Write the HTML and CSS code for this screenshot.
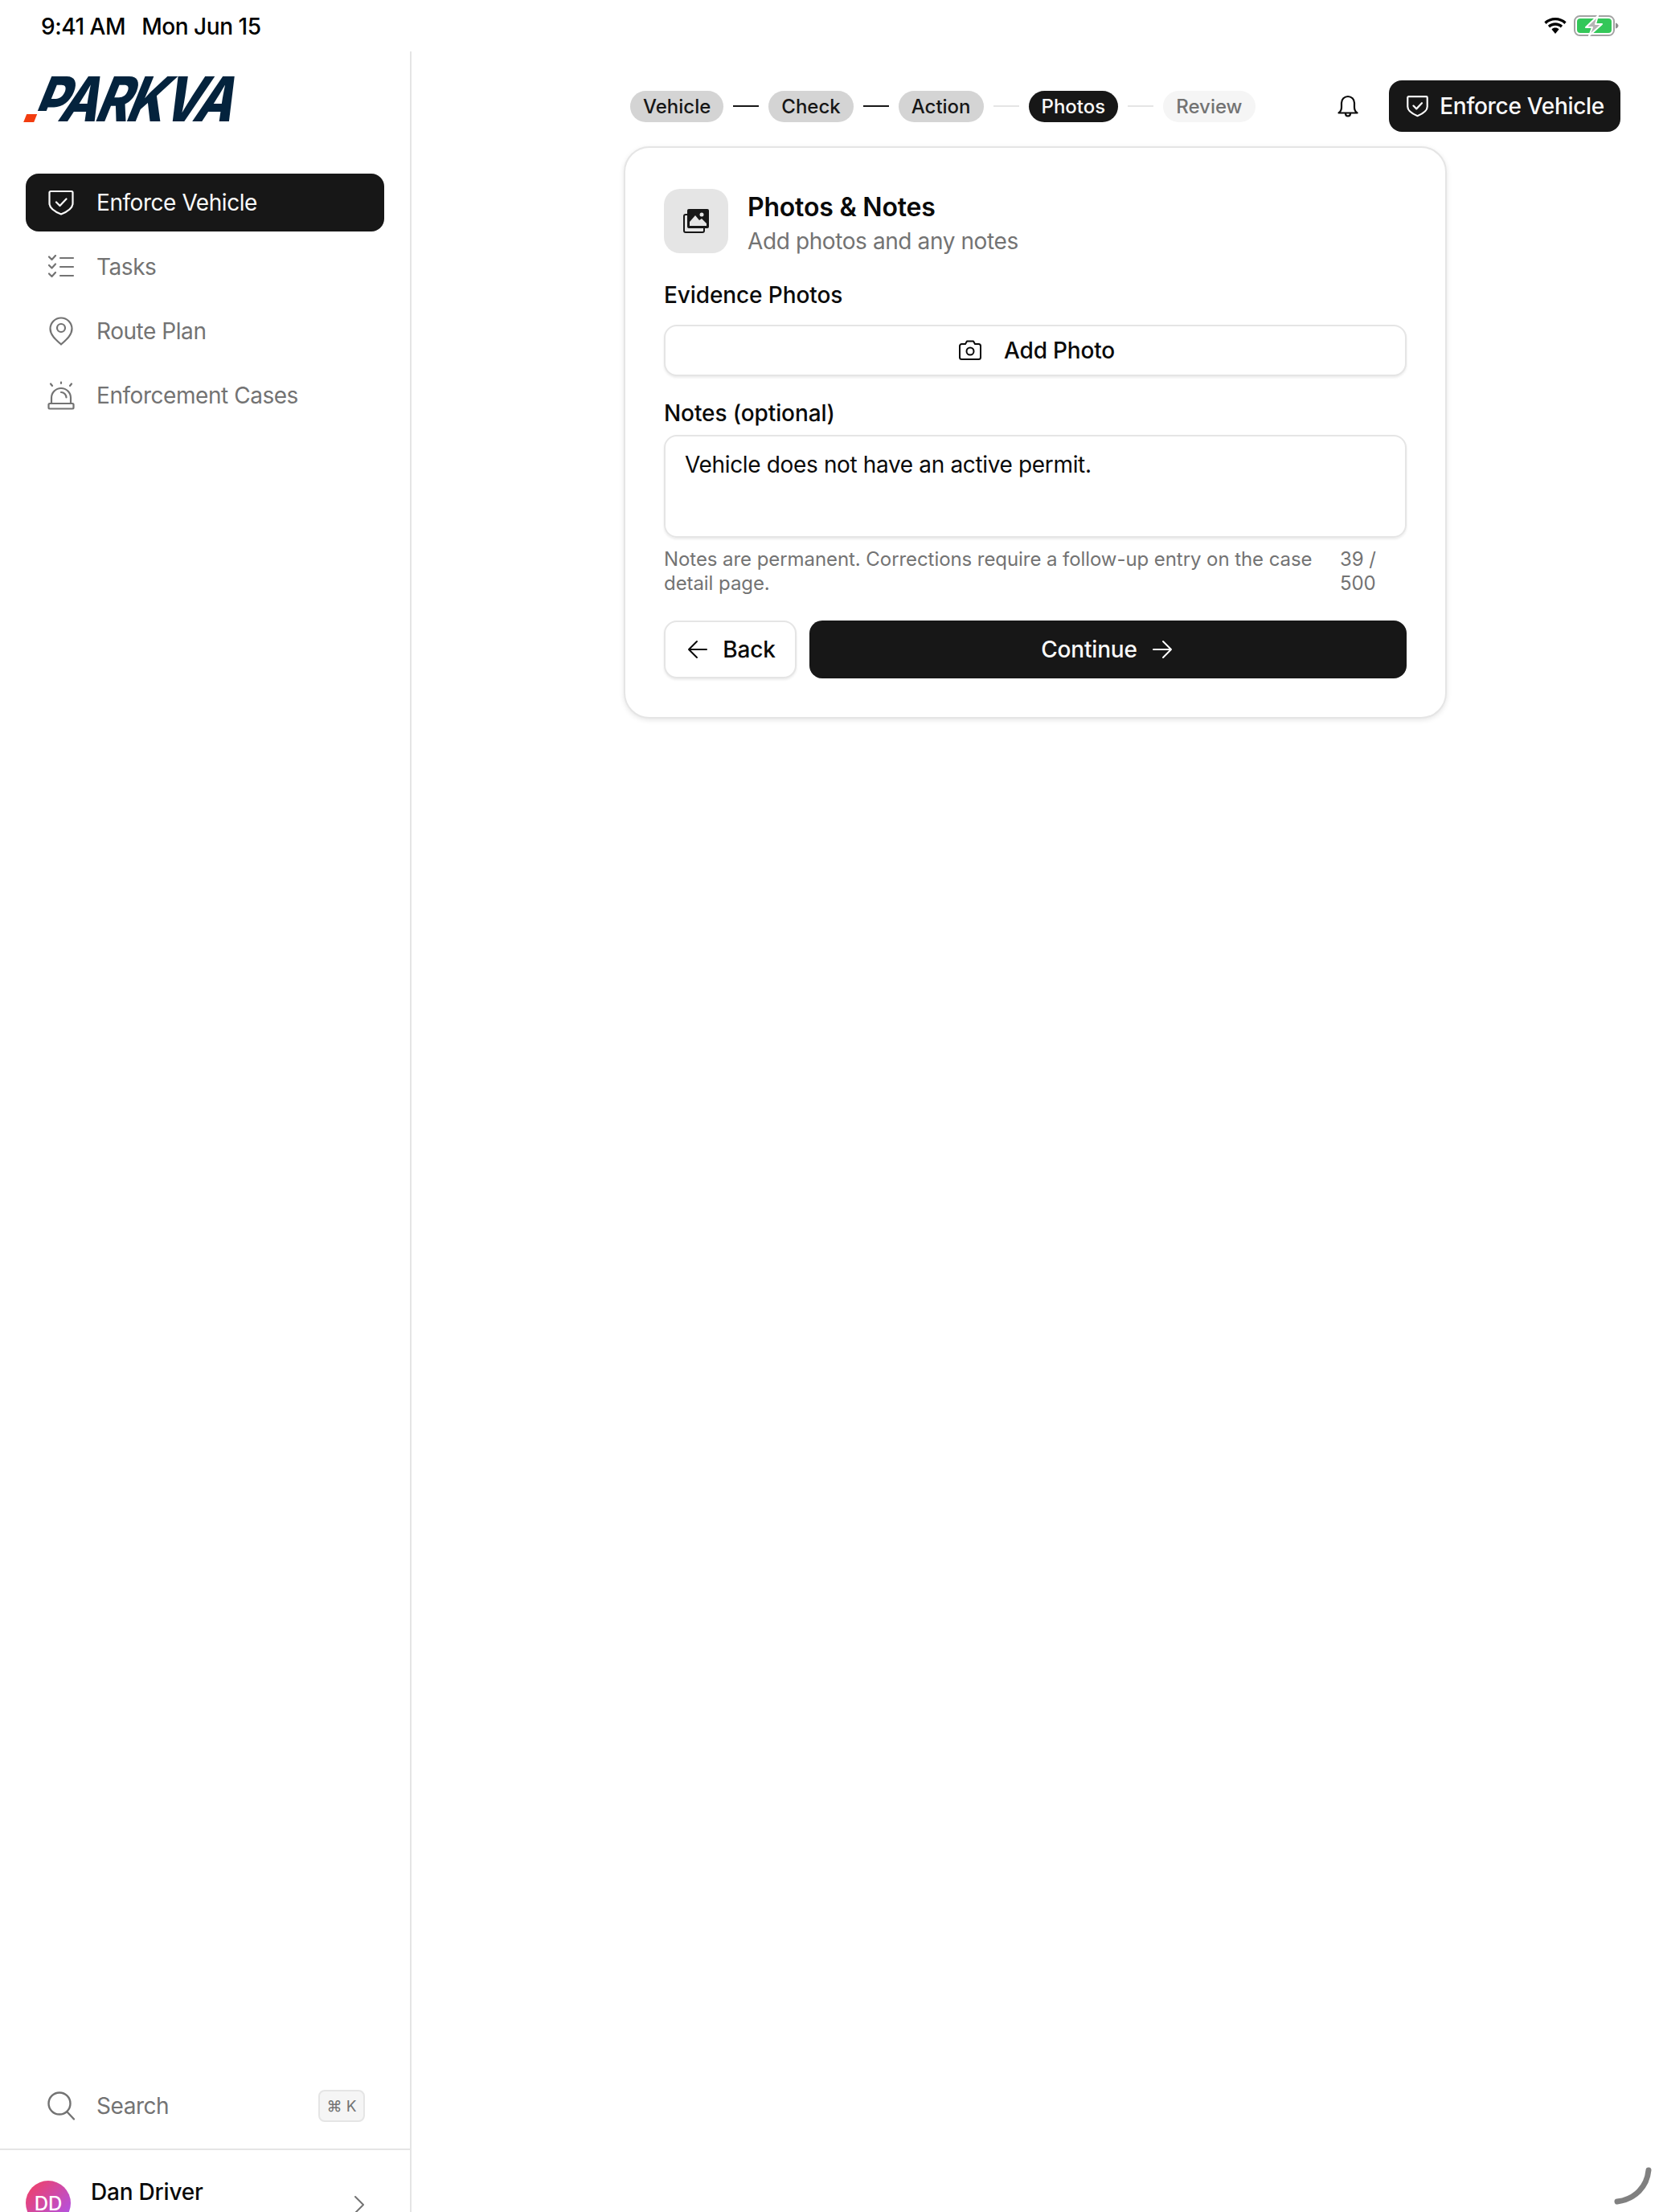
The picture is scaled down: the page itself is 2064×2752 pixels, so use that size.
FILE: index.html
```html
<!DOCTYPE html>
<html lang="en">
<head>
    <meta charset="UTF-8">
    <title>Parkva - Photos &amp; Notes</title>
    <link rel="stylesheet" href="styles.css">
</head>
<body>

    <!-- Status bar -->
    <div class="status-bar">
        <div class="status-time"><span>9:41 AM</span><span>Mon Jun 15</span></div>
        <div class="status-icons">
            <svg class="wifi" width="30" height="21" viewBox="0 0 28 20"><path d="M14 3.2c4.2 0 8 1.6 10.8 4.3l2.2-2.4C23.600 1.900 19 0 14 0S4.400 1.900 1 5.100l2.200 2.400C6 4.800 9.800 3.200 14 3.200z" fill="#000"/><path d="M14 9.300c2.500 0 4.800 1 6.500 2.500l2.200-2.400C20.400 7.300 17.300 6 14 6S7.600 7.300 5.300 9.400l2.200 2.400C9.200 10.300 11.500 9.300 14 9.300z" fill="#000"/><path d="M14 12c-1.700 0-3.200.6-4.300 1.700L14 19l4.300-5.300C17.200 12.600 15.700 12 14 12z" fill="#000"/></svg>
            <svg class="battery" width="56" height="26" viewBox="0 0 56 26">
                <rect x="1" y="1" width="49" height="24" rx="6.500" fill="none" stroke="#a3a3a3" stroke-width="2"/>
                <rect x="4" y="4" width="43" height="18" rx="4" fill="#34c759"/>
                <path d="M52 9.500c2 .5 3.500 2 3.500 3.500s-1.500 3-3.500 3.500z" fill="#8e8e8e"/>
                <path d="M30 0.500L15 15h8l-4 10.500L35 11h-8z" fill="#b5b5b5" stroke="#fff" stroke-width="2" stroke-linejoin="round"/>
            </svg>
        </div>
    </div>

    <div class="app">
        <aside class="sidebar">
            <div class="logo"><span class="logo-text">PARKVA</span><span class="logo-mark"></span></div>

            <nav class="nav">
                <a class="nav-item active">
                    <svg width="32" height="32" viewBox="0 0 32 32" fill="none" stroke="currentColor" stroke-width="2.200" stroke-linecap="round" stroke-linejoin="round"><path d="M3 2h26c.8 0 1.500.7 1.500 1.500V17c0 6.500-7 10.500-14.500 13.500C8.500 27.500 1.500 23.500 1.500 17V3.500C1.500 2.700 2.200 2 3 2z"/><path d="M10 15.500l4.500 4.500L22.500 11.500"/></svg>
                    Enforce Vehicle
                </a>
                <a class="nav-item">
                    <svg width="32" height="30" viewBox="0 0 32 30" fill="none" stroke="currentColor" stroke-width="2.200" stroke-linecap="round" stroke-linejoin="round"><path d="M1 2.500l3.500 3.500L9 1"/><path d="M1 13l3.500 3.500L9 11.500"/><path d="M1 23.500L4.500 27 9 22"/><path d="M15 4h16M15 15h16M15 26h16"/></svg>
                    Tasks
                </a>
                <a class="nav-item">
                    <svg width="32" height="36" viewBox="0 0 32 36" fill="none" stroke="currentColor" stroke-width="2.200" stroke-linecap="round" stroke-linejoin="round"><path d="M16 34.500C10 29 2.500 23 2.500 15a13.500 13.500 0 0 1 27 0c0 8-7.500 14-13.500 19.500z"/><circle cx="16" cy="14" r="5"/></svg>
                    Route Plan
                </a>
                <a class="nav-item">
                    <svg width="34" height="36" viewBox="0 0 34 36" fill="none" stroke="currentColor" stroke-width="2.200" stroke-linecap="round" stroke-linejoin="round"><path d="M5 28V21a12 12 0 0 1 24 0v7"/><path d="M17 14a6.500 6.500 0 0 1 6.500 6.500"/><rect x="1.500" y="28" width="31" height="6.500" rx="1.500"/><path d="M17 1.500v1.500M4 3.500l2 2.500M30 3.500l-2 2.500"/></svg>
                    Enforcement Cases
                </a>
            </nav>

            <div class="search-row">
                <svg width="34" height="36" viewBox="0 0 34 36" fill="none" stroke="#737373" stroke-width="2.400" stroke-linecap="round"><circle cx="15" cy="15" r="13.500"/><path d="M25 26l8 8.500"/></svg>
                <span class="search-label">Search</span>
                <span class="kbd">⌘ K</span>
            </div>

            <div class="user-row">
                <div class="avatar">DD</div>
                <div class="user-name">Dan Driver</div>
                <svg class="chevron" width="14" height="24" viewBox="0 0 14 24" fill="none" stroke="#737373" stroke-width="2" stroke-linecap="round" stroke-linejoin="round"><path d="M2 2l10 10L2 22"/></svg>
            </div>
        </aside>

        <main class="main">
            <header class="topbar">
                <div class="steps">
                    <span class="step done">Vehicle</span>
                    <span class="step-line done"></span>
                    <span class="step done">Check</span>
                    <span class="step-line done"></span>
                    <span class="step done">Action</span>
                    <span class="step-line"></span>
                    <span class="step current">Photos</span>
                    <span class="step-line"></span>
                    <span class="step">Review</span>
                </div>
                <svg class="bell" width="26" height="28" viewBox="0 0 26 28" fill="none" stroke="#0a0a0a" stroke-width="2.200" stroke-linecap="round" stroke-linejoin="round"><path d="M1.500 22.500c2-1.500 3.500-3 3.500-7V10a8 8 0 0 1 16 0v5.500c0 4 1.500 5.500 3.500 7z"/><path d="M10 23c0 2 1.300 3.500 3 3.500s3-1.500 3-3.500"/></svg>
                <button class="btn-enforce">
                    <svg width="27" height="28" viewBox="0 0 32 32" fill="none" stroke="currentColor" stroke-width="2.600" stroke-linecap="round" stroke-linejoin="round"><path d="M3 2h26c.8 0 1.500.7 1.500 1.500V17c0 6.500-7 10.500-14.500 13.500C8.500 27.500 1.500 23.500 1.500 17V3.500C1.500 2.700 2.200 2 3 2z"/><path d="M10 15.500l4.500 4.500L22.500 11.500"/></svg>
                    Enforce Vehicle
                </button>
            </header>

            <section class="card">
                <div class="card-head">
                    <div class="card-icon">
                        <svg width="32" height="30" viewBox="0 0 32 30"><rect x="1" y="7" width="25" height="22" rx="2" fill="none" stroke="#171717" stroke-width="2"/><rect x="5" y="0" width="27" height="24" rx="2" fill="#171717"/><path d="M8 21v-5l7-8 5 6 3-2 6 6v3z" fill="#e5e5e5"/><circle cx="23" cy="7" r="2.500" fill="#e5e5e5"/></svg>
                    </div>
                    <div class="card-title">
                        <h2>Photos &amp; Notes</h2>
                        <p>Add photos and any notes</p>
                    </div>
                </div>

                <label class="field-label">Evidence Photos</label>
                <button class="btn-outline add-photo">
                    <svg width="28" height="26" viewBox="0 0 28 26" fill="none" stroke="#0a0a0a" stroke-width="2" stroke-linecap="round" stroke-linejoin="round"><path d="M3.500 5h4.500l2-3.500h8l2 3.500h4.500a2.500 2.500 0 0 1 2.500 2.500v14a2.500 2.500 0 0 1-2.500 2.500h-21A2.500 2.500 0 0 1 1 21.500v-14A2.500 2.500 0 0 1 3.500 5z"/><circle cx="14" cy="14" r="4.500"/></svg>
                    Add Photo
                </button>

                <label class="field-label notes-label">Notes (optional)</label>
                <div class="notes-box">Vehicle does not have an active permit.</div>
                <div class="helper">
                    <span class="helper-text">Notes are permanent. Corrections require a follow-up entry on the case detail page.</span>
                    <span class="helper-count">39 / 500</span>
                </div>

                <div class="actions">
                    <button class="btn-outline btn-back">
                        <svg width="26" height="24" viewBox="0 0 26 24" fill="none" stroke="#0a0a0a" stroke-width="2" stroke-linecap="round" stroke-linejoin="round"><path d="M12 2L2 12l10 10M2 12h22"/></svg>
                        Back
                    </button>
                    <button class="btn-continue">
                        Continue
                        <svg width="26" height="24" viewBox="0 0 26 24" fill="none" stroke="#fff" stroke-width="2" stroke-linecap="round" stroke-linejoin="round"><path d="M14 2l10 10-10 10M24 12H2"/></svg>
                    </button>
                </div>
            </section>
        </main>
    </div>

    <!-- Home corner mark -->
    <svg class="corner-mark" width="52" height="52" viewBox="0 0 52 52" fill="none" stroke="#808080" stroke-width="7" stroke-linecap="round"><path d="M44 4C42 24 28 40 5 43"/></svg>

</body>
</html>
```
FILE: styles.css
```css
* {
    box-sizing: border-box;
}
html, body {
    margin: 0;
    padding: 0;
    height: 2752px;
    overflow: hidden;
}
body {
    font-family: 'Inter', 'Liberation Sans', sans-serif;
    background: #ffffff;
    color: #0a0a0a;
    font-size: 28px;
    letter-spacing: -0.45px;
    position: relative;
}
button {
    font-family: inherit;
    cursor: pointer;
}
.status-bar {
    height: 64px;
    display: flex;
    justify-content: space-between;
    padding: 16px 50px 0 51px;
}
.status-time {
    display: flex;
    gap: 20px;
    font-size: 28px;
    font-weight: 500;
    line-height: 34px;
    color: #000;
}
.status-icons {
    display: flex;
    align-items: flex-start;
    gap: 8px;
    padding-top: 3px;
}
.wifi {
    margin-top: 3px;
}
.app {
    display: flex;
    height: 2729px;
}
.sidebar {
    width: 512px;
    flex: none;
    height: 2729px;
    border-right: 2px solid #e5e5e5;
    display: flex;
    flex-direction: column;
    overflow: hidden;
}
.logo {
    height: 152px;
    padding: 31px 0 0 32px;
    position: relative;
}
.logo-text {
    display: block;
    font-family: 'Inter', sans-serif;
    font-size: 77px;
    font-weight: 800;
    line-height: 56px;
    letter-spacing: -4px;
    color: #04233d;
    transform: skewX(-22deg) scaleX(0.82);
    transform-origin: left bottom;
    margin-left: 6px;
}
/* red foot of the P, the white part cuts the letter off above and beside it */
.logo-mark {
    position: absolute;
    left: 32px;
    top: 74px;
    width: 30px;
    height: 14px;
    background: linear-gradient(#f23c0f, #f23c0f) left bottom / 13px 10px no-repeat, #fff;
    transform: skewX(-22deg);
}
.nav {
    padding: 0 32px;
    display: flex;
    flex-direction: column;
    gap: 8px;
    flex: 1;
}
.nav-item {
    height: 72px;
    display: flex;
    align-items: center;
    border-radius: 16px;
    color: #737373;
    padding-left: 27px;
    gap: 27px;
    line-height: 1;
}
.nav-item svg {
    width: 34px;
    flex: none;
}
.nav-item.active {
    background: #171717;
    color: #fafafa;
}
.search-row {
    height: 64px;
    display: flex;
    align-items: center;
    padding: 0 56px 0 59px;
    margin-bottom: 21px;
    color: #737373;
}
.search-label {
    margin-left: 27px;
    flex: 1;
}
.kbd {
    width: 58px;
    height: 40px;
    border: 2px solid #e5e5e5;
    border-radius: 8px;
    background: #f5f5f5;
    font-size: 19px;
    letter-spacing: 0;
    display: flex;
    align-items: center;
    justify-content: center;
}
.user-row {
    border-top: 2px solid #e5e5e5;
    height: 120px;
    padding: 38px 0 0 32px;
    display: flex;
    align-items: flex-start;
    position: relative;
    flex: none;
}
.avatar {
    width: 56px;
    height: 56px;
    border-radius: 50%;
    background: linear-gradient(135deg, #f43f5e, #a855f7);
    color: #fff;
    font-size: 24px;
    letter-spacing: 0;
    font-weight: 500;
    display: flex;
    align-items: center;
    justify-content: center;
}
.user-name {
    margin-left: 25px;
    margin-top: -3px;
    font-weight: 500;
    letter-spacing: -0.2px;
}
.chevron {
    position: absolute;
    left: 440px;
    top: 56px;
}
.main {
    flex: 1;
    padding-top: 36px;
}
.topbar {
    height: 64px;
    display: flex;
    align-items: center;
    padding: 0 48px 0 272px;
}
.steps {
    display: flex;
    align-items: center;
    gap: 12px;
    margin-right: auto;
}
.step {
    height: 39px;
    padding: 0 16px;
    border-radius: 20px;
    background: #f5f5f5;
    color: #737373;
    font-size: 24px;
    letter-spacing: 0;
    font-weight: 500;
    display: flex;
    align-items: center;
}
.step.done {
    background: #d4d4d4;
    color: #171717;
}
.step.current {
    background: #171717;
    color: #fafafa;
}
.step-line {
    width: 32px;
    height: 2px;
    background: #e5e5e5;
}
.step-line.done {
    background: #171717;
}
.bell {
    margin-right: 38px;
}
.btn-enforce {
    height: 64px;
    border: none;
    border-radius: 16px;
    background: #171717;
    color: #fafafa;
    font-size: 28px;
    letter-spacing: -0.3px;
    font-weight: 500;
    padding: 0 20px 0 22px;
    display: flex;
    align-items: center;
    gap: 14px;
}
.card {
    width: 1024px;
    margin: 18px 0 0 264px;
    background: #fff;
    border: 2px solid #e5e5e5;
    border-radius: 32px;
    box-shadow: 0 2px 6px rgba(0, 0, 0, 0.1);
    padding: 51px 48px 48px;
}
.card-head {
    display: flex;
    gap: 24px;
}
.card-title {
    padding-top: 2px;
}
.card-icon {
    width: 80px;
    height: 80px;
    border-radius: 20px;
    background: #e5e5e5;
    display: flex;
    align-items: center;
    justify-content: center;
}
h2 {
    margin: 0;
    font-size: 32px;
    font-weight: 600;
    line-height: 42px;
    letter-spacing: -0.2px;
    color: #0a0a0a;
}
.card-head p {
    margin: 0;
    line-height: 42px;
    color: #737373;
    letter-spacing: -0.4px;
}
.field-label {
    display: block;
    font-weight: 500;
    line-height: 36px;
    letter-spacing: -0.1px;
    margin-top: 28px;
    margin-bottom: 19px;
}
.btn-outline {
    border: 2px solid #e5e5e5;
    border-radius: 16px;
    background: #fff;
    box-shadow: 0 2px 3px rgba(0, 0, 0, 0.08);
    font-size: 28px;
    letter-spacing: -0.2px;
    font-weight: 500;
    color: #0a0a0a;
    display: flex;
    align-items: center;
    justify-content: center;
}
.add-photo {
    width: 100%;
    height: 64px;
    gap: 28px;
    padding-left: 10px;
}
.notes-label {
    margin-top: 28px;
    margin-bottom: 9px;
}
.notes-box {
    height: 128px;
    border: 2px solid #e5e5e5;
    border-radius: 16px;
    box-shadow: 0 2px 3px rgba(0, 0, 0, 0.08);
    padding: 17px 24px;
    line-height: 36px;
    letter-spacing: -0.35px;
}
.helper {
    display: flex;
    justify-content: space-between;
    margin-top: 12px;
    font-size: 24px;
    letter-spacing: -0.07px;
    line-height: 30px;
    color: #737373;
}
.helper-text {
    width: 815px;
}
.helper-count {
    width: 83px;
}
.actions {
    display: flex;
    gap: 16px;
    margin-top: 31px;
}
.btn-back {
    width: 165px;
    height: 72px;
    gap: 18px;
    padding-left: 9px;
}
.btn-continue {
    flex: 1;
    height: 72px;
    border: none;
    border-radius: 16px;
    background: #171717;
    color: #fafafa;
    font-size: 28px;
    letter-spacing: -0.2px;
    font-weight: 500;
    display: flex;
    align-items: center;
    justify-content: center;
    gap: 18px;
    padding-right: 9px;
}
.corner-mark {
    position: absolute;
    right: 5px;
    bottom: 4px;
}
```
